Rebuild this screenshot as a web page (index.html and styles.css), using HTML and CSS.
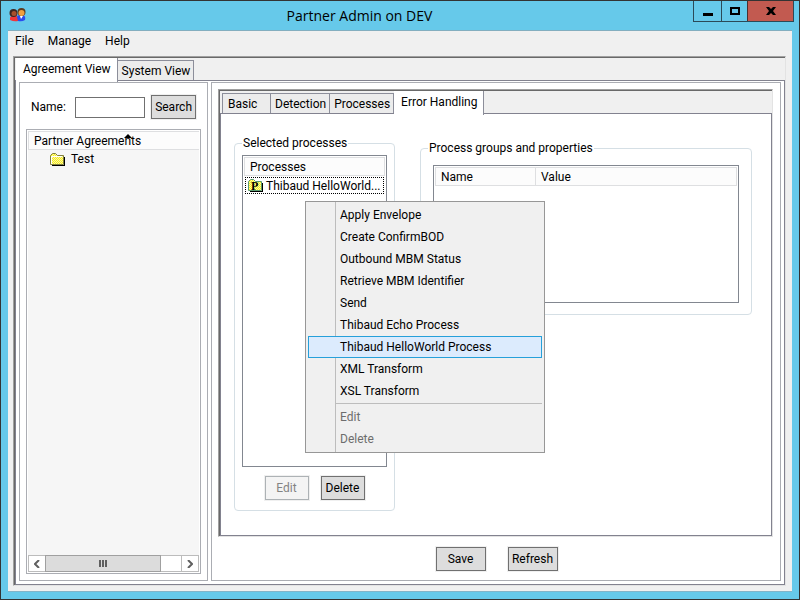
FILE: index.html
```html
<!DOCTYPE html>
<html lang="en">
<head>
  <meta charset="UTF-8">
  <title>Partner Admin on DEV</title>
  <link rel="stylesheet" href="styles.css">
</head>
<body>
  <div class="window">
    <header class="titlebar">
      <svg class="app-icon" viewBox="0 0 17 15" aria-hidden="true">
        <path d="M1 10q0-2 3-2h3q2 0 2 2v3q-4 1-8-1z" fill="#f0363a"/>
        <path d="M8 9q0-2 3-2h3q3 1 2 5-3 2-7 1z" fill="#2a4cf0"/>
        <path d="M11 8l1 3 2-3z" fill="#fff"/>
        <circle cx="4.500" cy="5" r="4" fill="#3c2622"/>
        <circle cx="5" cy="5.500" r="2.500" fill="#a8502c"/>
        <circle cx="12.500" cy="4" r="4" fill="#5c3a1e"/>
        <circle cx="12.500" cy="5" r="3" fill="#f0a040"/>
      </svg>
      <h1 class="title">Partner Admin on DEV</h1>
      <div class="controls">
        <button class="control min" aria-label="Minimize"><svg width="10" height="10"><path d="M0 7h10v3H0z"/></svg></button>
        <button class="control max" aria-label="Maximize"><svg width="10" height="8"><path d="M1 1h8v6H1z" fill="none" stroke="#000" stroke-width="2"/></svg></button>
        <button class="control close" aria-label="Close"><svg width="10" height="8"><path d="M0 0h3l2 2 2-2h3L7 4l3 4H7L5 6 3 8H0l3-4z"/></svg></button>
      </div>
    </header>

    <div class="client">
      <nav class="menubar">
        <button>File</button>
        <button>Manage</button>
        <button>Help</button>
      </nav>

      <div class="tabs outer">
        <div class="tab-strip" role="tablist">
          <button class="tab active" role="tab">Agreement View</button>
          <button class="tab" role="tab">System View</button>
        </div>
        <main class="pane split">
          <section class="panel left">
            <div class="search">
              <label for="name">Name:</label>
              <input type="text" id="name">
              <button class="btn">Search</button>
            </div>
            <div class="tree">
              <div class="tree-body">
                <div class="heading">Partner Agreements
                  <svg class="sort" width="8" height="4"><path d="M4 0l4 4H0z"/></svg>
                </div>
                <div class="tree-row">
                  <svg width="15" height="13" aria-hidden="true">
                    <defs>
                      <pattern id="dither" width="2" height="2" patternUnits="userSpaceOnUse">
                        <path d="M0 0h2v2H0z" fill="#f4ee20"/>
                        <path d="M0 0h1v1H0zM1 1h1v1H1z" fill="#fff7a0"/>
                      </pattern>
                    </defs>
                    <path d="M2 12.500h13M14.500 4v9" stroke="#000"/>
                    <path d="M.5 11.500v-9l2-2h3l2 2h6v9z" fill="url(#dither)" stroke="#808040"/>
                    <path d="M1.500 11V3.500h11" stroke="#fff" fill="none"/>
                  </svg>
                  <span>Test</span>
                </div>
              </div>
              <div class="scrollbar">
                <button class="arrow" aria-label="Scroll left"><svg width="6" height="8"><path d="M5 0L1 4l4 4"/></svg></button>
                <div class="track"><div class="thumb"><i></i><i></i><i></i></div></div>
                <button class="arrow" aria-label="Scroll right"><svg width="6" height="8"><path d="M1 0l4 4-4 4"/></svg></button>
              </div>
            </div>
          </section>

          <section class="panel right">
            <div class="tabs inner">
              <div class="tab-strip" role="tablist">
                <button class="tab basic" role="tab">Basic</button>
                <button class="tab" role="tab">Detection</button>
                <button class="tab" role="tab">Processes</button>
                <button class="tab active" role="tab">Error Handling</button>
              </div>
              <div class="pane details">
                <fieldset class="selected">
                  <legend>Selected processes</legend>
                  <div class="list">
                    <table>
                      <thead><tr><th>Processes</th></tr></thead>
                      <tbody><tr><td><div class="process">
                        <svg width="15" height="13" aria-hidden="true">
                          <path d="M2 12.500h13M14.500 4v9" stroke="#000"/>
                          <path d="M.5 11.500v-9l2-2h3l2 2h6v9z" fill="url(#dither)" stroke="#5a9a70"/>
                          <text x="3" y="11" class="icon-letter">P</text>
                        </svg>
                        <span>Thibaud HelloWorld...</span>
                      </div></td></tr></tbody>
                    </table>
                    <div class="context-menu" role="menu">
                      <button role="menuitem">Apply Envelope</button>
                      <button role="menuitem">Create ConfirmBOD</button>
                      <button role="menuitem">Outbound MBM Status</button>
                      <button role="menuitem">Retrieve MBM Identifier</button>
                      <button role="menuitem">Send</button>
                      <button role="menuitem">Thibaud Echo Process</button>
                      <button role="menuitem" class="hover">Thibaud HelloWorld Process</button>
                      <button role="menuitem">XML Transform</button>
                      <button role="menuitem">XSL Transform</button>
                      <hr>
                      <button role="menuitem" disabled>Edit</button>
                      <button role="menuitem" disabled>Delete</button>
                    </div>
                  </div>
                  <div class="actions">
                    <button class="btn" disabled>Edit</button>
                    <button class="btn">Delete</button>
                  </div>
                </fieldset>

                <fieldset class="properties">
                  <legend>Process groups and properties</legend>
                  <div class="list">
                    <table>
                      <thead><tr><th class="name-col">Name</th><th>Value</th></tr></thead>
                    </table>
                  </div>
                </fieldset>
              </div>
            </div>
            <div class="footer">
              <button class="btn wide">Save</button>
              <button class="btn wide">Refresh</button>
            </div>
          </section>
        </main>
      </div>
    </div>
  </div>
</body>
</html>
```

FILE: styles.css
```css
* { box-sizing: border-box; }

body {
  margin: 0;
  font: 12px/16px Roboto, "Open Sans", sans-serif;
  color: #000;
}

button, input {
  font: inherit;
  color: inherit;
  margin: 0;
  padding: 0;
  border: 0;
  background: none;
  white-space: nowrap;
}

svg { display: block; }

.window {
  display: flex;
  flex-direction: column;
  min-height: 100vh;
  padding: 0 7px 7px;
  border: 1px solid #333;
  background: #66c9ea;
}

/* title bar */
.titlebar {
  display: flex;
  height: 29px;
  margin-right: -2px;
}
.app-icon {
  width: 17px;
  height: 15px;
  margin: 7px 0 0 1px;
}
.title {
  flex: 1;
  margin: 0;
  font: 14px/30px "Open Sans", sans-serif;
  text-align: center;
}
.controls {
  display: flex;
  height: 21px;
  border: 1px solid #2b4a58;
  border-top: 0;
}
.control {
  display: flex;
  align-items: center;
  justify-content: center;
}
.min { width: 27px; }
.max { width: 26px; border-left: 1px solid #2b4a58; }
.close {
  width: 46px;
  background: #c25a50;
  border-left: 1px solid #4a3030;
}

.client {
  flex: 1;
  display: flex;
  flex-direction: column;
  padding: 0 6px 5px 5px;
  background: #f0f0f0;
  border-top: 1px solid #83aebf;
  border-bottom: 1px solid #83b4c8;
}

.menubar {
  display: flex;
  gap: 14px;
  height: 25px;
  padding: 0 2px;
}
.menubar button { height: 20px; }

/* tabs */
.tabs {
  flex: 1;
  display: flex;
  flex-direction: column;
  border: 1px solid;
  border-color: #a0a0a0 #e3e3e3 #e3e3e3 #a0a0a0;
  background: #f0f0f0;
  box-shadow: inset 1px 1px #696969;
  padding: 1px 0 0 1px;
}
.tab-strip {
  display: flex;
  align-items: flex-end;
  height: 22px;
  padding-left: 1px;
}
.tab {
  height: 20px;
  padding: 0 3px 0 4px;
  background: #ececec;
  border: 1px solid #8c8e9a;
  border-width: 1px 1px 0 0;
}
.tab.active {
  position: relative;
  height: 24px;
  margin-bottom: -2px;
  padding: 0 6px 3px 7px;
  background: #fff;
  border-top: 0;
}
.pane {
  flex: 1;
  display: flex;
  background: #fff;
  border: 1px solid #82828f;
}
.inner .tab { border-left-width: 1px; }
.inner .tab + .tab { border-left-width: 0; }
.inner .tab-strip { padding-left: 2px; }
.inner .basic {
  width: 49px;
  padding-left: 5px;
  text-align: left;
}

.split {
  gap: 3px;
  padding: 1px 3px 3px;
}
.panel {
  display: flex;
  flex-direction: column;
  border: 1px solid #abadb3;
}
.left {
  width: 189px;
  padding: 12px 6px 6px;
}
.right {
  flex: 1;
  padding: 6px 7px 9px 6px;
}

.search {
  display: flex;
  align-items: center;
  gap: 6px;
  height: 24px;
  padding: 0 5px;
}
.search input {
  width: 70px;
  height: 21px;
  margin-left: auto;
  padding: 0 3px;
  border: 1px solid #707070;
}
.btn {
  min-width: 44px;
  height: 24px;
  padding: 0 3px;
  background: #ddd;
  border: 1px solid #707070;
  box-shadow: 0 0 0 1px #f0f0f0;
}
.btn:disabled {
  color: #838383;
  background: #f4f4f4;
  border-color: #adb2b5;
}
.btn.wide { min-width: 50px; }

/* agreement tree */
.tree {
  flex: 1;
  display: flex;
  flex-direction: column;
  margin-top: 10px;
  padding: 1px;
  border: 1px solid #abadb3;
}
.tree-body {
  flex: 1;
  background: #f6f6f6;
}
.heading, th {
  height: 19px;
  padding: 0 5px;
  background: #fcfcfc;
  border: 1px solid #dedfe1;
  font-weight: normal;
  text-align: left;
}
.heading {
  position: relative;
  padding-top: 1px;
  border-right: 0;
}
.sort {
  position: absolute;
  top: 2px;
  left: 95px;
}
.tree-row {
  display: flex;
  align-items: center;
  gap: 6px;
  height: 18px;
  padding-left: 22px;
}

.scrollbar {
  display: flex;
  height: 17px;
  border: 1px solid #bcbcbc;
}
.arrow {
  display: flex;
  align-items: center;
  justify-content: center;
  width: 16px;
}
.arrow path {
  fill: none;
  stroke: #606060;
  stroke-width: 2;
}
.track {
  flex: 1;
  display: flex;
  border-right: 1px solid #bcbcbc;
}
.thumb {
  display: flex;
  align-items: center;
  justify-content: center;
  gap: 1px;
  width: 85%;
  margin: -1px 0;
  background: #dcdcdc;
  border: 1px solid #a0a0a0;
}
.thumb i {
  width: 2px;
  height: 7px;
  background: #606060;
}

/* error handling */
.details {
  align-items: flex-start;
  gap: 25px;
  padding: 21px 19px 24px 13px;
}
fieldset {
  min-width: 0;
  margin: 0;
  border: 1px solid #d5dfe5;
  border-radius: 4px;
}
legend {
  padding: 0 1px;
}
.selected {
  align-self: stretch;
  display: flex;
  flex-direction: column;
  width: 161px;
  padding: 4px 7px 10px;
}
.properties {
  flex: 1;
  height: 175px;
  margin-top: 5px;
  padding: 9px 12px 11px;
}
.properties legend { margin-left: -5px; }
.properties .list { height: 138px; }
.list {
  position: relative;
  flex: 1;
  padding: 1px;
  border: 1px solid #828790;
}
table {
  width: 100%;
  border-collapse: separate;
  border-spacing: 0;
}
th + th { border-left: 0; }
td { padding: 1px 1px 0; }
.name-col { width: 101px; }
.process {
  display: flex;
  align-items: center;
  gap: 3px;
  height: 17px;
  padding-left: 2px;
  border: 1px dotted #000;
  white-space: nowrap;
}
.icon-letter { font: bold 12px "Liberation Serif", serif; }

.actions {
  display: flex;
  justify-content: center;
  gap: 12px;
  margin-top: 9px;
}
.footer {
  display: flex;
  justify-content: center;
  gap: 22px;
  padding: 10px 0 0 2px;
}

.context-menu {
  position: absolute;
  z-index: 1;
  top: 45px;
  left: 62px;
  display: flex;
  flex-direction: column;
  width: 240px;
  padding: 2px;
  background: linear-gradient(to right, transparent 29px, #bdbdbd 29px, #bdbdbd 30px, transparent 30px) #f0f0f0;
  border: 1px solid #979797;
}
.context-menu button {
  height: 22px;
  padding-left: 31px;
  border: 1px solid transparent;
  text-align: left;
}
.context-menu .hover {
  background: #dcebfd;
  border-color: #26a0da;
}
.context-menu button:disabled { color: #6d6d6d; }
.context-menu hr {
  width: 207px;
  height: 1px;
  margin: 1px 0 2px auto;
  border: 0;
  background: #bdbdbd;
}
```
